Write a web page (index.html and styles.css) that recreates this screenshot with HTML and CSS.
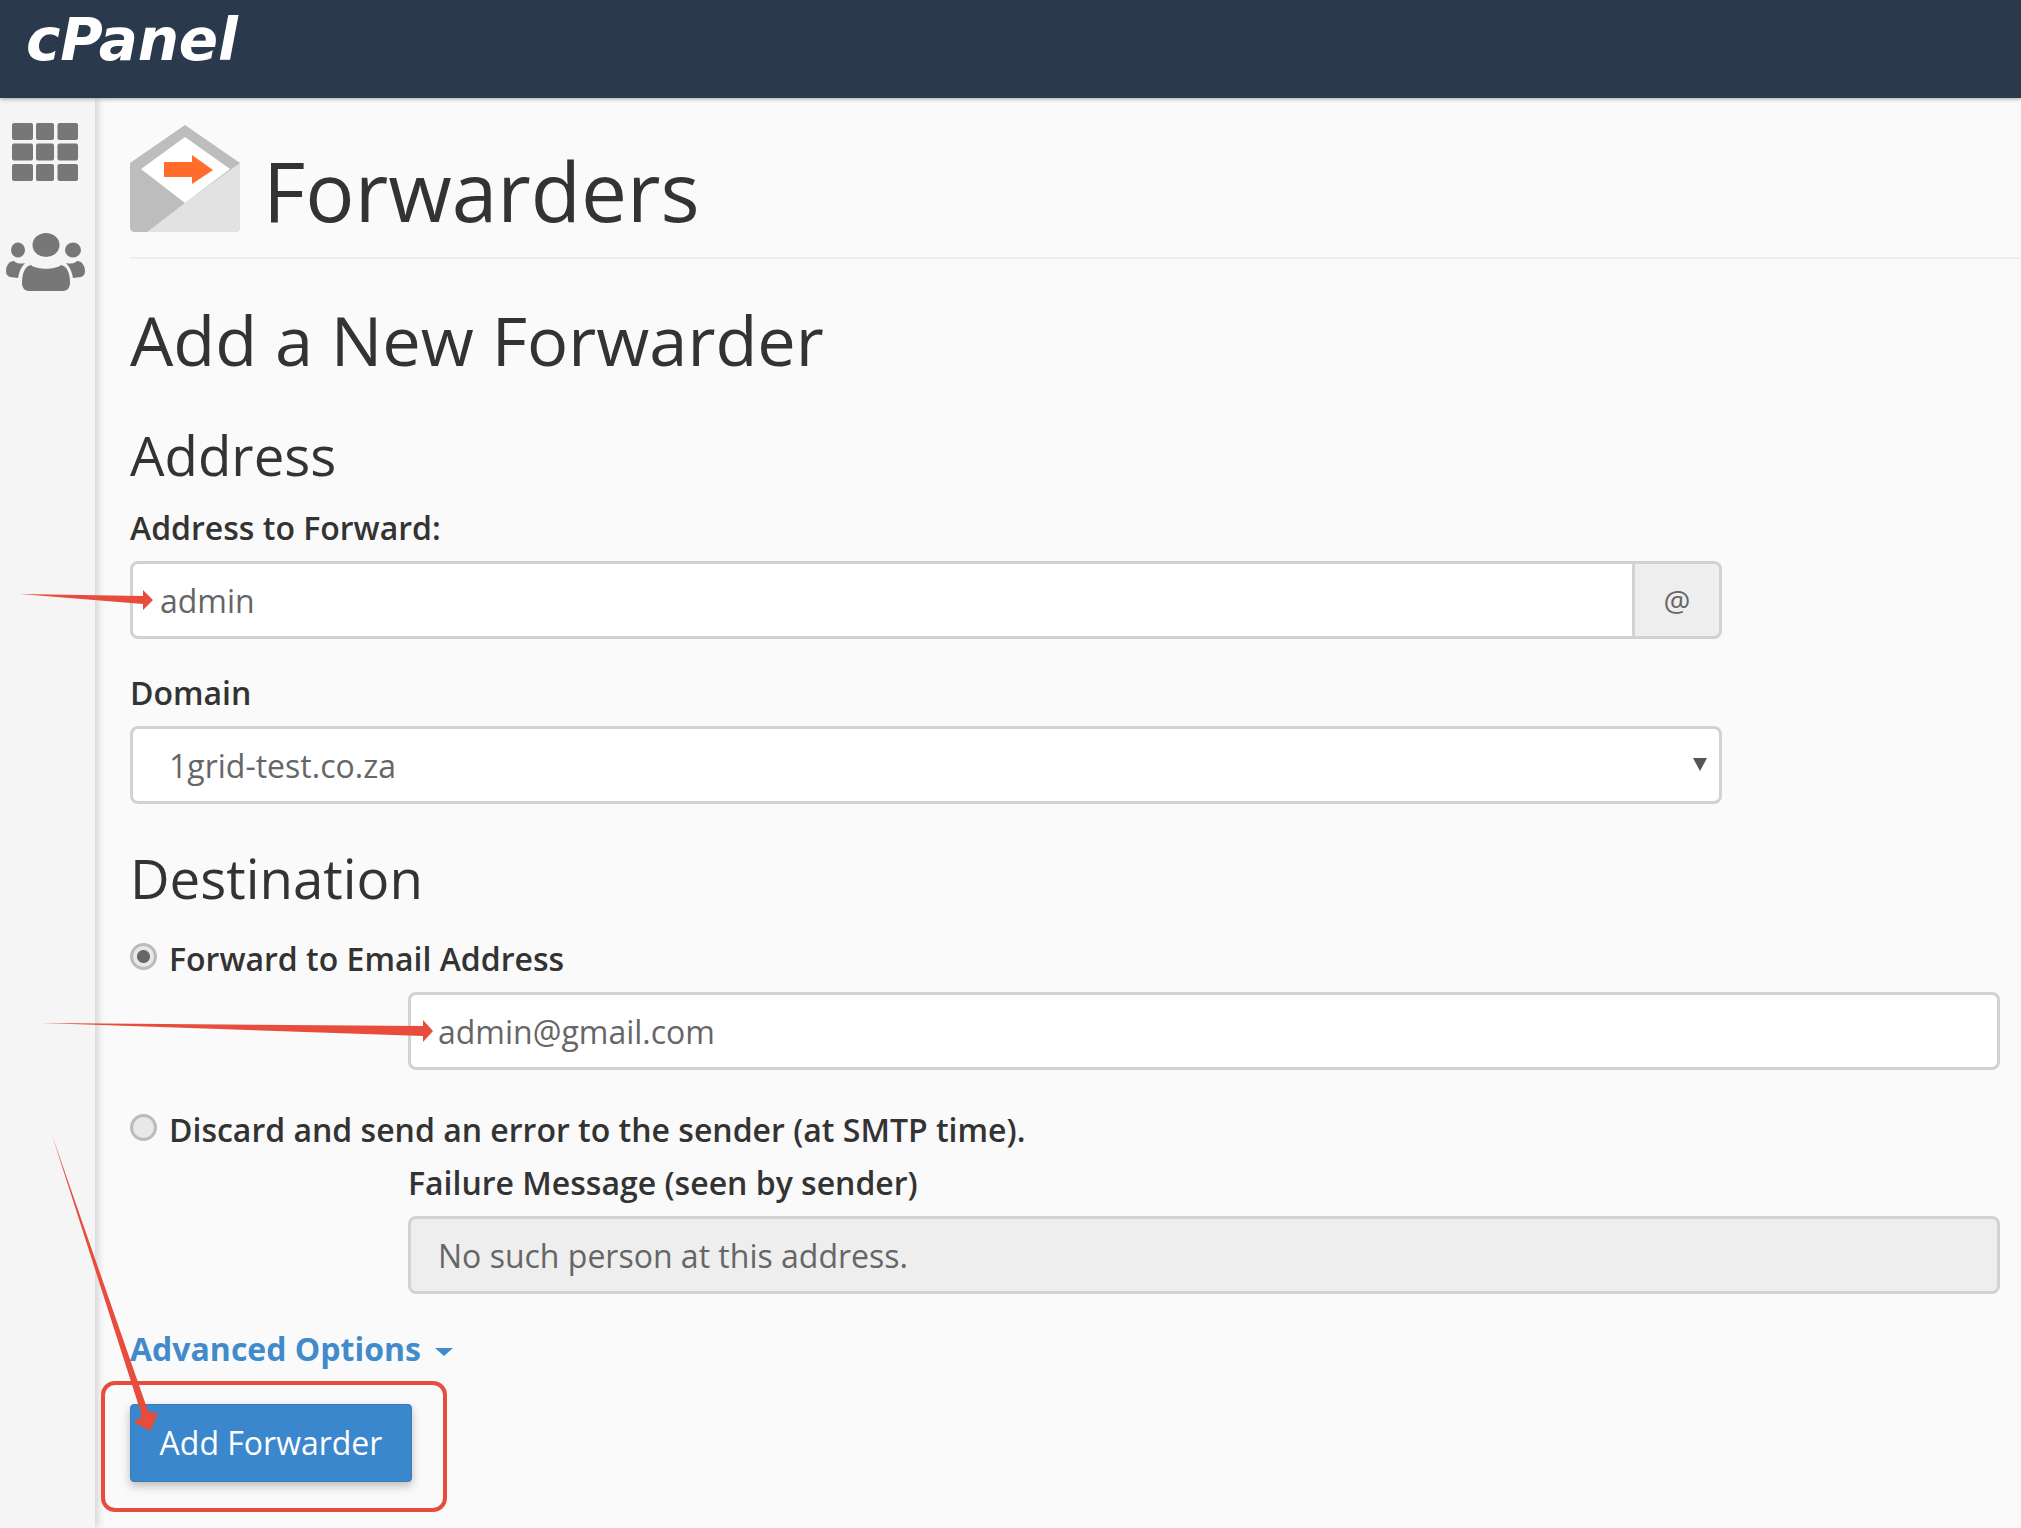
FILE: index.html
```html
<!DOCTYPE html>
<html>
<head>
    <title>Forwarders - cPanel</title>
    <meta name="viewport" content="width=device-width, initial-scale=1">
    <link rel="stylesheet" href="styles.css">
</head>
<body>
    <div class="topbar">
        <span class="logo">cPanel</span>
    </div>
    <div class="layout">
        <div class="sidebar">
            <svg class="nav-grid" width="66" height="58" viewBox="0 0 66 58">
                <rect x="0" y="0" width="21" height="17" rx="2"/>
                <rect x="24" y="0" width="18" height="17" rx="2"/>
                <rect x="45.5" y="0" width="20.5" height="17" rx="2"/>
                <rect x="0" y="20.5" width="21" height="17" rx="2"/>
                <rect x="24" y="20.5" width="18" height="17" rx="2"/>
                <rect x="45.5" y="20.5" width="20.5" height="17" rx="2"/>
                <rect x="0" y="41" width="21" height="17" rx="2"/>
                <rect x="24" y="41" width="18" height="17" rx="2"/>
                <rect x="45.5" y="41" width="20.5" height="17" rx="2"/>
            </svg>
            <svg class="nav-users" width="81" height="58" viewBox="0 0 81 58">
                <ellipse cx="41" cy="12" rx="13.5" ry="12"/>
                <ellipse cx="13" cy="17" rx="7" ry="7.5"/>
                <ellipse cx="68" cy="17" rx="8" ry="7.5"/>
                <path d="M26 32 C32 37 50 37 56 32 C62 33 65 40 65 50 C65 55 62 58 58 58 L24 58 C20 58 17 55 17 50 C17 40 20 33 26 32 Z"/>
                <path d="M9 28 C12 31 16 31 20 30 C16 34 14 39 13 45 L5 44 C2 43 1 41 1 38 C1 33 4 28 9 28 Z"/>
                <path d="M72 28 C69 31 65 31 61 30 C65 34 67 39 68 45 L76 44 C79 43 80 41 80 38 C80 33 77 28 72 28 Z"/>
            </svg>
        </div>
        <div class="main">
            <div class="page-head">
                <svg class="page-icon" width="110" height="108" viewBox="0 0 110 108">
                    <path d="M55 0 L110 38 L110 102 Q110 107 105 107 L5 107 Q0 107 0 102 L0 38 Z" fill="#bdbdbd"/>
                    <path d="M55 78 L110 38 L110 102 Q110 107 105 107 L17 107 Z" fill="#e2e2e2"/>
                    <path d="M55 12 L100 44 L55 78 L11 44 Z" fill="#fff"/>
                    <path d="M34 37 L62 37 L62 30 L83 45 L62 59 L62 52 L34 52 Z" fill="#ff6c2c"/>
                </svg>
                <h1 class="page-title">Forwarders</h1>
            </div>
            <div class="content">
                <h2 class="section-title">Add a New Forwarder</h2>

                <h3 class="sub-title">Address</h3>
                <label class="field-label" for="fwd-address">Address to Forward:</label>
                <div class="input-group">
                    <input class="text-input" id="fwd-address" type="text" value="admin">
                    <span class="addon">@</span>
                </div>

                <label class="field-label domain-label" for="fwd-domain">Domain</label>
                <div class="select-wrap">
                    <select class="text-input select-input" id="fwd-domain">
                        <option>1grid-test.co.za</option>
                    </select>
                    <span class="select-arrow"></span>
                </div>

                <h3 class="sub-title destination-title">Destination</h3>
                <div class="radio-row">
                    <span class="radio radio-on"></span>
                    <span class="radio-text">Forward to Email Address</span>
                </div>
                <div class="indented">
                    <input class="text-input" type="text" value="admin@gmail.com">
                </div>

                <div class="radio-row discard-row">
                    <span class="radio"></span>
                    <span class="radio-text">Discard and send an error to the sender (at SMTP time).</span>
                </div>
                <div class="indented">
                    <div class="field-label failure-label">Failure Message (seen by sender)</div>
                    <input class="text-input is-disabled" type="text" value="No such person at this address." disabled>
                </div>

                <a class="advanced-link" href="#">Advanced Options<span class="caret"></span></a>
                <div class="submit-row">
                    <button class="btn-primary">Add Forwarder</button>
                    <span class="highlight-box"></span>
                </div>
            </div>
        </div>
    </div>
    <!-- red arrows drawn over the screenshot -->
    <svg class="annotations" width="2021" height="1528" viewBox="0 0 2021 1528">
        <polygon points="20,594 143,596 143,590 153,600 143,610 143,604"/>
        <polygon points="42,1023 423,1026 423,1020 433,1031 423,1042 423,1036"/>
        <polygon points="52,1135 148,1411 158,1414 150,1431 134,1422 142,1416"/>
    </svg>
</body>
</html>
```

FILE: styles.css
```css
* {
    box-sizing: border-box;
}
body {
    font-family: "Open Sans", sans-serif;
    margin: 0;
    height: 1528px;
    overflow: hidden;
    position: relative;
    background-color: #fafafa;
    color: #333;
}
.topbar {
    height: 98px;
    padding: 9px 0 0 26px;
    background-color: #2a3a4c;
    box-shadow: 0 1px 4px rgba(0,0,0,0.35);
    position: relative;
}
.logo {
    display: inline-block;
    font-family: "DejaVu Sans", sans-serif;
    font-size: 58px;
    line-height: 62px;
    font-weight: 700;
    font-style: italic;
    letter-spacing: -0.2px;
    color: #fff;
}
.layout {
    display: flex;
    height: 1430px;
}
.sidebar {
    width: 95px;
    flex-shrink: 0;
    display: flex;
    flex-direction: column;
    align-items: center;
    gap: 52px;
    padding-top: 25px;
    padding-right: 5px;
    background-color: #f5f5f5;
    box-shadow: 3px 0 8px rgba(0,0,0,0.16);
}
.nav-grid,
.nav-users {
    fill: #777;
}
.main {
    flex: 1;
    padding-left: 35px;
}
.page-head {
    display: flex;
    align-items: center;
    gap: 23px;
    height: 161px;
    padding-top: 17px;
    padding-bottom: 15px;
    border-bottom: 2px solid #eee;
}
.page-title {
    margin: 22px 0 0;
    font-size: 82px;
    font-weight: 400;
    line-height: 100px;
    color: #333;
}
.content {
    padding-right: 21px;
}
.section-title {
    margin: 39px 0 0;
    font-size: 68.5px;
    font-weight: 400;
    line-height: 84px;
}
.sub-title {
    margin: 40px 0 0;
    font-size: 54.6px;
    font-weight: 400;
    line-height: 66px;
}
.field-label {
    display: block;
    margin-top: 20px;
    font-size: 32px;
    font-weight: 600;
    line-height: 40px;
    color: #333;
}
.domain-label {
    margin-top: 34px;
}
.input-group {
    display: flex;
    margin-top: 13px;
    width: 1592px;
}
.text-input {
    display: block;
    width: 100%;
    height: 78px;
    padding: 0 27px;
    font-family: "Open Sans", sans-serif;
    font-size: 32px;
    color: #666;
    background-color: #fff;
    border: 3px solid #d2d2d2;
    border-radius: 8px;
}
.input-group .text-input {
    flex: 1;
    border-radius: 8px 0 0 8px;
}
.addon {
    width: 87px;
    display: flex;
    align-items: center;
    justify-content: center;
    font-size: 30px;
    color: #666;
    background-color: #eee;
    border: 3px solid #d2d2d2;
    border-left: 0;
    border-radius: 0 8px 8px 0;
}
.select-wrap {
    position: relative;
    margin-top: 13px;
    width: 1592px;
}
.select-input {
    padding-left: 36px;
    appearance: none;
}
.select-arrow {
    position: absolute;
    right: 15px;
    top: 32px;
    border-left: 7px solid transparent;
    border-right: 7px solid transparent;
    border-top: 13px solid #555;
}
.destination-title {
    margin-top: 41px;
}
.radio-row {
    display: flex;
    align-items: center;
    gap: 12px;
    font-size: 32px;
    font-weight: 600;
    line-height: 40px;
    margin-top: 28px;
}
.radio {
    width: 27px;
    height: 27px;
    margin-top: -6px;
    flex-shrink: 0;
    border-radius: 50%;
    border: 3px solid #bbb;
    background-color: #e8e8e8;
}
.radio-on {
    background: radial-gradient(circle, #666 0 6px, #e8e8e8 7px);
}
.indented {
    margin-left: 278px;
    width: 1592px;
}
.radio-row + .indented .text-input {
    margin-top: 13px;
}
.discard-row {
    margin-top: 40px;
}
.failure-label {
    margin-top: 13px;
    margin-bottom: 13px;
}
.is-disabled {
    background-color: #eee;
}
.advanced-link {
    display: inline-block;
    margin-top: 35px;
    font-size: 32px;
    font-weight: 700;
    line-height: 40px;
    color: #428bca;
    text-decoration: none;
}
.caret {
    display: inline-block;
    margin-left: 14px;
    vertical-align: middle;
    border-left: 9px solid transparent;
    border-right: 9px solid transparent;
    border-top: 8px solid #428bca;
}
.submit-row {
    position: relative;
    margin-top: 35px;
}
.btn-primary {
    display: block;
    width: 282px;
    height: 78px;
    padding-bottom: 2px;
    font-family: "Open Sans", sans-serif;
    font-size: 32px;
    color: #fff;
    background-color: #3a87cd;
    border: 1px solid #357ebd;
    border-radius: 4px;
    box-shadow: 0 4px 10px rgba(0,0,0,0.25);
}
.highlight-box {
    position: absolute;
    left: -29px;
    top: -23px;
    width: 346px;
    height: 131px;
    border: 4px solid #e74c3c;
    border-radius: 14px;
}
.annotations {
    position: absolute;
    left: 0;
    top: 0;
    fill: #e74c3c;
    pointer-events: none;
}
```
